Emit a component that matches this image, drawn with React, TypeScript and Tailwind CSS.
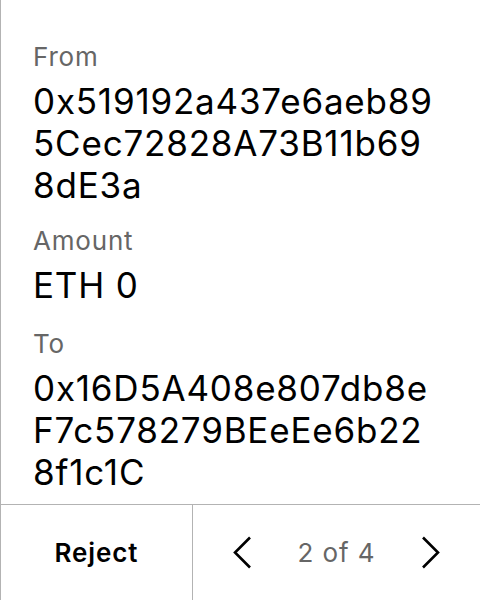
import React from "react";

function Field({ label, value, className }: { label: string; value: string; className?: string }) {
  return (
    <div className={"flex flex-col " + (className ?? "")}>
      <div className="text-[26px] leading-[32px] tracking-[0.8px] text-[#666666]">{label}</div>
      <div className="mt-[7px] w-[411px] text-[35px] leading-[42px] tracking-[0.8px] text-black break-all">{value}</div>
    </div>
  );
}

export default function App() {
  return (
    <div
      className="h-[600px] w-[480px] flex flex-col bg-white border-l border-[#b3b3b3] overflow-hidden"
      style={{ fontFamily: "Inter, 'Noto Sans', sans-serif" }}
    >
      <div className="flex-1 flex flex-col pl-[32px] pt-[41px]">
        <Field label="From" value="0x519192a437e6aeb895Cec72828A73B11b698dE3a" />
        <Field className="mt-[19px]" label="Amount" value="ETH 0" />
        <Field className="mt-[22px]" label="To" value="0x16D5A408e807db8eF7c578279BEeEe6b228f1c1C" />
      </div>
      <div className="h-[96px] flex border-t border-[#b3b3b3]">
        <div className="w-[192px] border-r border-[#b3b3b3] flex items-center justify-center text-[26px] tracking-[0.9px] font-semibold text-black">
          Reject
        </div>
        <div className="flex-1 flex items-center justify-center gap-[46px]">
          <svg width="20" height="33" viewBox="0 0 20 33" fill="none">
            <polyline points="18,1.5 3,16.5 18,31.5" stroke="black" strokeWidth="2.6" strokeLinecap="butt" strokeLinejoin="miter" />
          </svg>
          <span className="text-[26px] tracking-[0.9px] text-[#666666]">2 of 4</span>
          <svg width="20" height="33" viewBox="0 0 20 33" fill="none">
            <polyline points="2,1.5 17,16.5 2,31.5" stroke="black" strokeWidth="2.6" strokeLinecap="butt" strokeLinejoin="miter" />
          </svg>
        </div>
      </div>
    </div>
  );
}
